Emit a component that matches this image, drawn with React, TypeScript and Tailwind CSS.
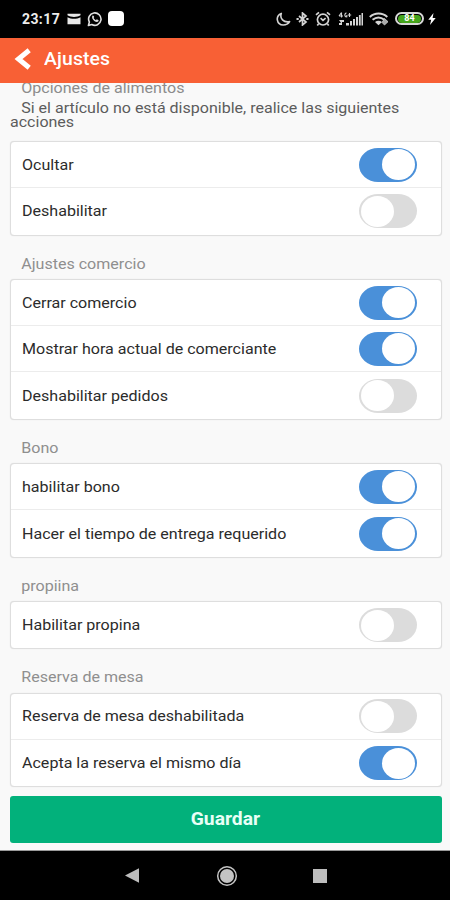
import React from "react";

interface SettingItem {
  label: string;
  enabled: boolean;
}

interface SettingGroup {
  title: string;
  description?: string;
  items: SettingItem[];
}

const initialGroups: SettingGroup[] = [
  {
    title: "Opciones de alimentos",
    description: "Si el artículo no está disponible, realice las siguientes acciones",
    items: [
      { label: "Ocultar", enabled: true },
      { label: "Deshabilitar", enabled: false },
    ],
  },
  {
    title: "Ajustes comercio",
    items: [
      { label: "Cerrar comercio", enabled: true },
      { label: "Mostrar hora actual de comerciante", enabled: true },
      { label: "Deshabilitar pedidos", enabled: false },
    ],
  },
  {
    title: "Bono",
    items: [
      { label: "habilitar bono", enabled: true },
      { label: "Hacer el tiempo de entrega requerido", enabled: true },
    ],
  },
  {
    title: "propiina",
    items: [{ label: "Habilitar propina", enabled: false }],
  },
  {
    title: "Reserva de mesa",
    items: [
      { label: "Reserva de mesa deshabilitada", enabled: false },
      { label: "Acepta la reserva el mismo día", enabled: true },
    ],
  },
];

function StatusBar() {
  return (
    <div className="flex h-[37.5px] shrink-0 items-center bg-black pl-[22px] pr-[14px] text-white">
      <span className="text-[14px] font-bold leading-none tracking-[0.4px] text-[#ececec]">23:17</span>
      {/* Mail */}
      <svg className="ml-[7px] h-[12px] w-[14px]" viewBox="0 0 14 12" fill="#e8e8e8">
        <path d="M0.5 0.8h13v1.500C10 4.600 4 4.600 0.500 2.300z" />
        <path d="M0.5 4.200c4 2.200 9 2.200 13 0v7h-13z" />
      </svg>
      {/* WhatsApp */}
      <svg className="ml-[6px] h-[16px] w-[16px]" viewBox="0 0 16 16">
        <path
          d="M1.4 14.5l1-3.4a6.2 6.2 0 1 1 2.4 2.4z"
          fill="none"
          stroke="#e0e0e0"
          strokeWidth="1.6"
          strokeLinejoin="round"
        />
        <path
          d="M5.4 4.7c.5-.5 1.1-.3 1.3.2l.5 1.2-.6 1c.6 1 1.3 1.6 2.3 2.1l.8-.9 1.6.8c.5.3.3 1-.1 1.4-.9.9-2.5.4-3.9-.6C5.700 8.700 4.400 6.200 5.400 4.700z"
          fill="#e0e0e0"
        />
      </svg>
      <span className="ml-[5px] h-[15px] w-[16px] rounded-[4px] bg-white" />

      <div className="ml-auto flex items-center">
        {/* Do not disturb moon */}
        <svg className="h-[14px] w-[15px]" viewBox="0 0 15 14" fill="none" stroke="#d4d4d4" strokeWidth="1.6">
          <path d="M5.300 1.400C-1 4 0.500 13 7.300 13c3 0 5-1.200 6.300-3.400C7.500 10.800 3.500 6.500 5.300 1.400z" strokeLinejoin="round" />
        </svg>
        {/* Bluetooth */}
        <svg className="ml-[5px] h-[14px] w-[13px]" viewBox="0 0 13 14" fill="none" stroke="#d4d4d4" strokeWidth="1.7">
          <path d="M3 4l7 6-3.500 3V1L10 4l-7 6" />
          <path d="M0.500 7h2.200M10.300 7h2.200" strokeWidth="1.800" />
        </svg>
        {/* Alarm */}
        <svg className="ml-[6px] h-[16px] w-[16px]" viewBox="0 0 16 16" fill="none" stroke="#d4d4d4" strokeWidth="1.700">
          <ellipse cx="8" cy="8.600" rx="5.600" ry="5.400" />
          <path d="M5.600 7.200L8 9.300l2.600-2.100M1 3.900l3-2.600M15 3.900l-3-2.600M3.500 13l-1.200 1.600M12.500 13l1.200 1.600" />
        </svg>
        {/* Mobile signal */}
        <svg className="ml-[7px] h-[14px] w-[26px]" viewBox="0 0 26 14" fill="#d4d4d4">
          <path d="M3.500 0.500v5M1 4h4M3.500 0.500L1 4M8.500 1.200C6.500 0.500 6 5.500 8.800 4.800V3M11.500 1v4M9.800 3h3.400" fill="none" stroke="#d4d4d4" strokeWidth="1.100" />
          <path d="M1 8h5v2H4v3H1v-2h2zM8 11h3v2.500H8zM12 9h2v4.500h-2zM15 7h2v6.500h-2zM18 5h2v8.500h-2zM20.900 3h1.800v10.500h-1.800zM23.500 1H25v12.500h-1.500z" />
        </svg>
        {/* Wifi */}
        <svg className="ml-[5px] h-[14px] w-[20px]" viewBox="0 0 20 14" fill="none" stroke="#d4d4d4" strokeWidth="2">
          <path d="M0.800 5c5-4.600 12.500-4.600 17.500 0M3.600 7.800c3.600-3 8-3 11.800 0" />
          <path d="M6 10.100c2.200-1.700 4.800-1.700 7 0L9.500 13.200z" fill="#d4d4d4" stroke="none" />
          <path d="M15.500 6.500l3.500 3.200-3.500 3.300-2.500-2.500z" fill="#a8a8a8" stroke="#d4d4d4" strokeWidth="0.800" />
        </svg>
        {/* Battery */}
        <span className="ml-[6px] flex h-[13px] w-[29px] items-center justify-center rounded-full border-2 border-[#d8d8d8] p-px">
          <span className="flex h-[8px] w-full items-center justify-center rounded-full bg-[#45a51c] text-[9px] font-bold leading-none text-white">
            84
          </span>
        </span>
        <svg className="ml-[4px] h-[12px] w-[8px]" viewBox="0 0 8 12" fill="#ffffff">
          <path d="M5.500 0L0.300 6.800h2.900L2 12l5.700-7H4.600z" />
        </svg>
      </div>
    </div>
  );
}

function Header() {
  return (
    <header className="flex h-[45px] shrink-0 items-center bg-[#f86035] pb-[2px] pl-[14px] text-white">
      <svg className="h-[22px] w-[18px]" viewBox="0 0 18 22" fill="none" stroke="currentColor" strokeWidth="5">
        <path d="M15.200 2.300L4.500 11l10.700 8.700" />
      </svg>
      <h1 className="ml-[12px] origin-left scale-x-[1.08] text-[18px] font-medium leading-none tracking-[0.1px]">
        Ajustes
      </h1>
    </header>
  );
}

function Toggle({ enabled, onChange }: { enabled: boolean; onChange: () => void }) {
  return (
    <button
      type="button"
      role="switch"
      aria-checked={enabled}
      onClick={onChange}
      className={`flex h-[34px] w-[58.500px] items-center rounded-[19px/17px] px-[2px] ${
        enabled ? "justify-end bg-[#4a90d9]" : "justify-start bg-[#dcdcdc]"
      }`}
    >
      <span className="h-[31px] w-[33px] rounded-[50%] bg-white" />
    </button>
  );
}

export default function App() {
  const [groups, setGroups] = React.useState(initialGroups);

  const toggleItem = (groupIndex: number, itemIndex: number) => {
    setGroups((prev) =>
      prev.map((group, g) =>
        g !== groupIndex
          ? group
          : {
              ...group,
              items: group.items.map((item, i) => (i === itemIndex ? { ...item, enabled: !item.enabled } : item)),
            }
      )
    );
  };

  return (
    <div className="flex h-[900px] w-[450px] flex-col overflow-hidden bg-[#f9f9f9] font-[Roboto,sans-serif]">
      <StatusBar />
      <Header />

      {/* Settings list, scrolled slightly under the header */}
      <main className="flex min-h-0 flex-1 flex-col overflow-hidden pl-[9.500px] pr-[8.500px]">
        <div className="-mt-[3.500px] shrink-0">
          {groups.map((group, groupIndex) => (
            <section key={group.title}>
              {group.description ? (
                <div className="h-[62px]">
                  <h2 className="origin-left scale-x-[1.07] pl-[10.500px] text-[15px] leading-[18px] text-[#8c8c8c]">
                    {group.title}
                  </h2>
                  <p className="mt-[3.500px] w-[400px] origin-left scale-x-[1.068] indent-[10.500px] text-[15px] leading-[14.500px] text-[#5c5c5c]">
                    {group.description}
                  </p>
                </div>
              ) : (
                <h2 className="h-[43.300px] origin-left scale-x-[1.07] pl-[10.500px] pt-[19px] text-[15px] leading-[18px] text-[#8f8f8f]">
                  {group.title}
                </h2>
              )}
              <ul className="divide-y divide-[#ececec] rounded-[4px] border border-[#dedede] bg-white shadow-[0_0_1px_rgba(0,0,0,0.15)]">
                {group.items.map((item, itemIndex) => (
                  <li key={item.label} className="flex h-[46.300px] items-center justify-between pl-[11.300px] pr-[23.200px]">
                    <span className="origin-left scale-x-[1.07] pt-[1px] text-[15px] leading-none text-[#2b2b2b]">
                      {item.label}
                    </span>
                    <Toggle enabled={item.enabled} onChange={() => toggleItem(groupIndex, itemIndex)} />
                  </li>
                ))}
              </ul>
            </section>
          ))}
        </div>
        <button
          type="button"
          className="mt-[9px] h-[46.500px] w-full shrink-0 rounded-[3px] bg-[#02b17b] pb-[2px] text-[18px] font-bold text-[#e8fff6]"
        >
          <span className="inline-block scale-x-[1.07]">Guardar</span>
        </button>
      </main>

      {/* Android navigation */}
      <nav className="flex h-[50px] shrink-0 items-center border-t border-[#9a9a9a] bg-black">
        <svg className="ml-[125px] h-[15px] w-[14px]" viewBox="0 0 14 15" fill="#bdbdbd">
          <path d="M0 7.500L14 0.300v14.400z" />
        </svg>
        <svg className="ml-[77px] h-[22px] w-[22px]" viewBox="0 0 22 22">
          <circle cx="11" cy="11" r="9.300" fill="none" stroke="#c4c4c4" strokeWidth="1.500" />
          <circle cx="11" cy="11" r="7" fill="#c4c4c4" />
        </svg>
        <span className="ml-[75px] h-[14px] w-[14px] bg-[#bdbdbd]" />
      </nav>
    </div>
  );
}
